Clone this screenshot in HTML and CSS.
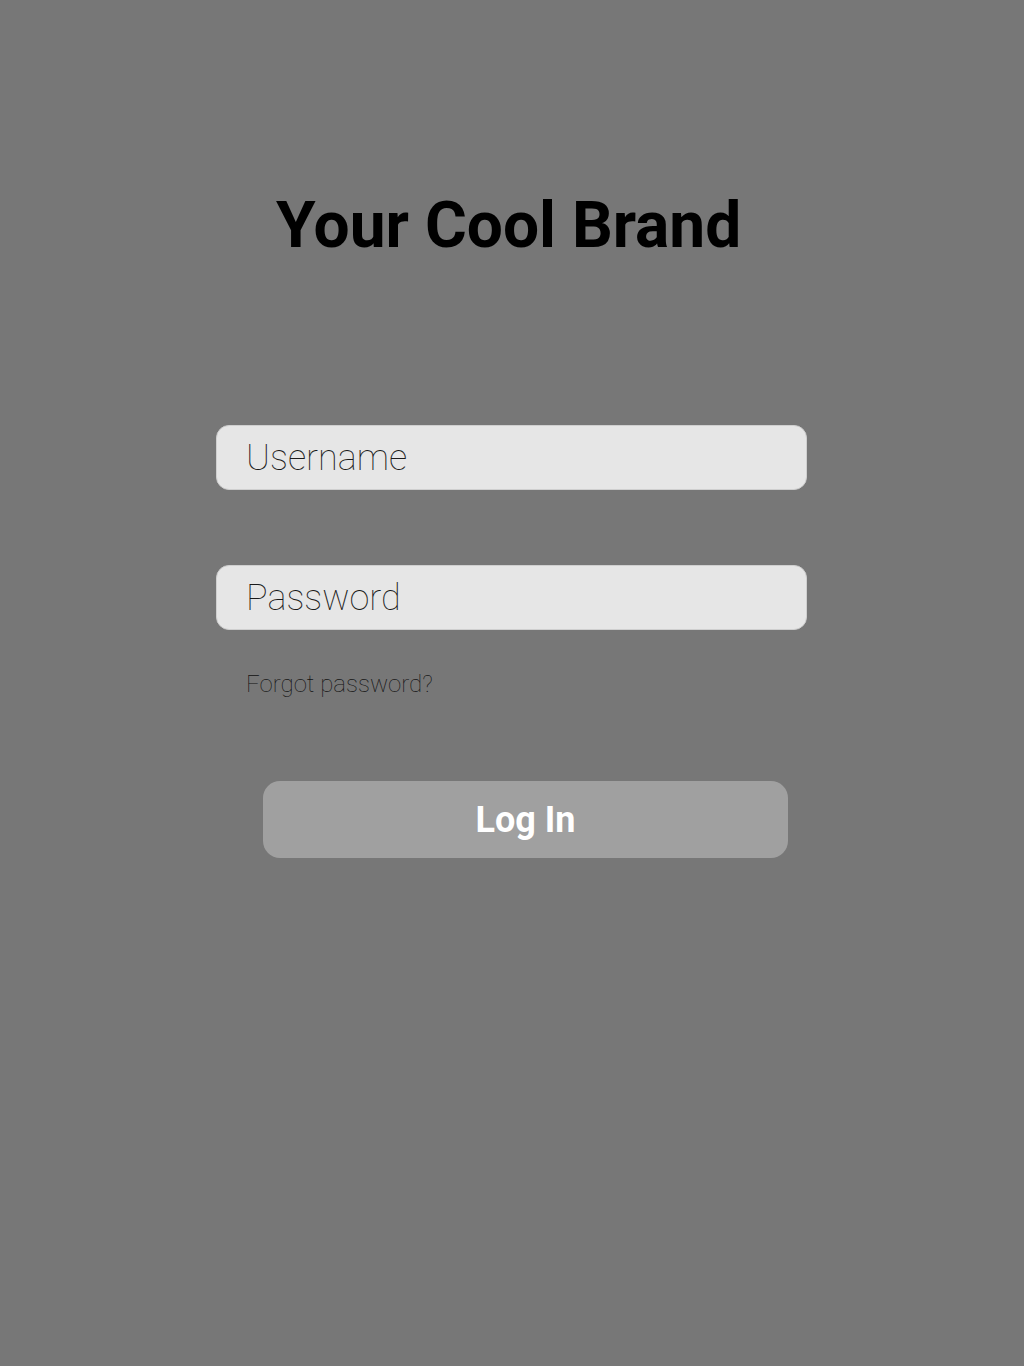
FILE: index.html
```html
<!DOCTYPE html>
<html>
<head>
<meta charset="utf-8">
<link rel="stylesheet" href="styles.css">
</head>
<body>
<main class="page">
  <h1 class="brand">Your Cool Brand</h1>
  <form class="login">
    <input class="field" type="text" placeholder="Username">
    <input class="field field-pw" type="password" placeholder="Password">
    <a class="forgot" href="#">Forgot password?</a>
    <button class="btn" type="button">Log In</button>
  </form>
</main>
</body>
</html>
```

FILE: styles.css
```css
html, body {
  margin: 0;
  padding: 0;
  background: #777777;
  height: 100%;
}
body {
  font-family: Roboto, "Liberation Sans", sans-serif;
}
.page {
  padding-top: 188px;
  display: flex;
  flex-direction: column;
  align-items: flex-start;
}
.brand {
  margin: 0 0 0 276px;
  width: 464px;
  text-align: center;
  font-size: 64px;
  line-height: 75px;
  font-weight: 700;
  color: #000;
  white-space: nowrap;
}
.login {
  margin: 162px 0 0 216px;
  width: 591px;
  display: flex;
  flex-direction: column;
}
.field {
  box-sizing: border-box;
  width: 591px;
  height: 65px;
  border: 1px solid #cfcfcf;
  border-radius: 13px;
  background: #e6e6e6;
  padding: 0 0 0 29px;
  font-family: Roboto, "Liberation Sans", sans-serif;
  font-weight: 100;
  font-size: 36px;
  color: #222;
  outline: none;
}
.field::placeholder {
  color: #1a1a1a;
  opacity: 1;
}
.field-pw {
  margin-top: 75px;
}
.forgot {
  margin: 41px 0 0 30px;
  font-size: 24px;
  font-weight: 100;
  line-height: 27px;
  color: #111;
  text-decoration: none;
}
.btn {
  margin: 83px 0 0 47px;
  width: 525px;
  height: 77px;
  border: none;
  border-radius: 17px;
  background: #a0a0a0;
  color: #fff;
  font-family: Roboto, "Liberation Sans", sans-serif;
  font-weight: 700;
  font-size: 36px;
  padding: 0;
  cursor: pointer;
}
```
